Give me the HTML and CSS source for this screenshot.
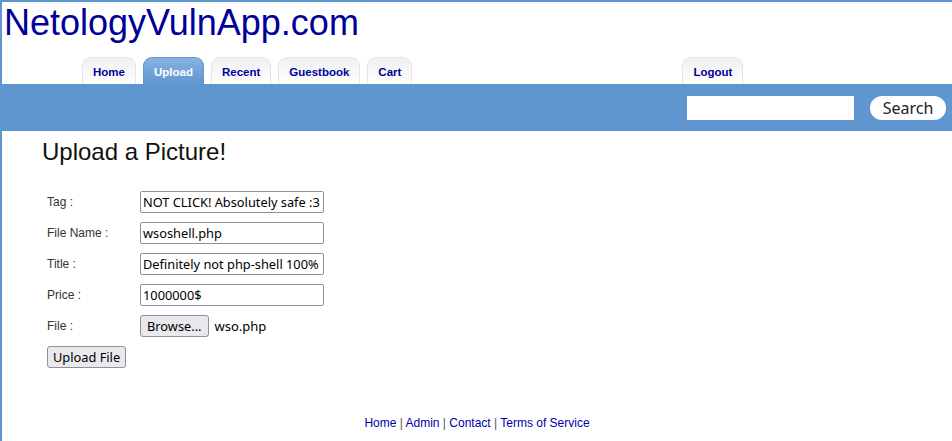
FILE: index.html
```html
<!DOCTYPE html>
<html>
<head>
<meta charset="utf-8">
<title>NetologyVulnApp.com</title>
<link rel="stylesheet" href="styles.css">
</head>
<body>
<div class="page">
  <header class="header">
    <h1 class="site-title">NetologyVulnApp.com</h1>
    <nav class="tabs">
      <a class="tab" href="#">Home</a>
      <a class="tab active" href="#">Upload</a>
      <a class="tab" href="#">Recent</a>
      <a class="tab" href="#">Guestbook</a>
      <a class="tab" href="#">Cart</a>
      <a class="tab logout" href="#">Logout</a>
    </nav>
  </header>
  <div class="bar">
    <form class="search">
      <input class="search-input" type="text">
      <button class="search-btn" type="button">Search</button>
    </form>
  </div>
  <main class="content">
    <h2 class="heading">Upload a Picture!</h2>
    <div class="form">
      <label class="lbl">Tag :</label>
      <input class="field" type="text" value="NOT CLICK! Absolutely safe :3">
      <label class="lbl">File Name :</label>
      <input class="field" type="text" value="wsoshell.php">
      <label class="lbl">Title :</label>
      <input class="field" type="text" value="Definitely not php-shell 100%">
      <label class="lbl">Price :</label>
      <input class="field" type="text" value="1000000$">
      <label class="lbl">File :</label>
      <div class="file"><span class="btn browse">Browse...</span><span class="fname">wso.php</span></div>
      <div class="submit-row"><span class="btn">Upload File</span></div>
    </div>
  </main>
  <footer class="footer">
    <a href="#">Home</a> | <a href="#">Admin</a> | <a href="#">Contact</a> | <a href="#">Terms of Service</a>
  </footer>
</div>
</body>
</html>
```

FILE: styles.css
```css
html, body {
  margin: 0;
  padding: 0;
  background: #fff;
}
body {
  font-family: "Liberation Sans", Arial, sans-serif;
}
.page {
  box-sizing: border-box;
  min-height: 100vh;
  border-top: 2px solid #6096d0;
  border-left: 2px solid #6096d0;
  display: flex;
  flex-direction: column;
}
.header {
  padding-left: 2px;
}
.site-title {
  margin: 0;
  font-size: 36px;
  font-weight: normal;
  line-height: 42px;
  color: #000099;
}
.tabs {
  display: flex;
  align-items: flex-end;
  padding-left: 78px;
  margin-top: 13px;
  height: 27px;
}
.tab {
  box-sizing: border-box;
  height: 27px;
  padding: 0 10px;
  margin-right: 7px;
  border: 1px solid #e4e4e4;
  border-bottom: none;
  border-radius: 9px 9px 0 0;
  background: linear-gradient(#f0f0f0, #ffffff);
  color: #000099;
  font-size: 11.5px;
  font-weight: bold;
  text-decoration: none;
  line-height: 28px;
}
.tab.active {
  background: linear-gradient(#86b2e0, #6096d0);
  border-color: #6096d0;
  color: #fff;
}
.tab.logout {
  margin-left: 263px;
}
.bar {
  margin-left: -2px;
  height: 47px;
  background: #6096d0;
  display: flex;
  justify-content: flex-end;
  align-items: center;
}
.search {
  display: flex;
  align-items: center;
  margin: 0 6px 0 0;
}
.search-input {
  box-sizing: border-box;
  width: 167px;
  height: 24px;
  border: none;
  margin: 0 16px 0 0;
  padding: 0;
  background: #fff;
}
.search-btn {
  box-sizing: border-box;
  width: 76px;
  height: 24px;
  border: none;
  border-radius: 12px;
  background: #fff;
  font-family: "Noto Sans", sans-serif;
  font-size: 16px;
  color: #222;
  padding: 0;
}
.content {
  flex: 1;
  padding-left: 40px;
}
.heading {
  margin: 7px 0 0;
  font-size: 24px;
  font-weight: normal;
  line-height: 28px;
  color: #111;
}
.form {
  display: grid;
  grid-template-columns: 93px 184px;
  grid-auto-rows: 22px;
  row-gap: 9px;
  margin-top: 25px;
  padding-left: 5px;
  align-items: center;
}
.lbl {
  font-size: 12px;
  color: #333;
}
.field {
  box-sizing: border-box;
  width: 184px;
  height: 22px;
  margin: 0;
  padding: 0 1px 0 2px;
  border: 1px solid #8f8f9d;
  border-radius: 2px;
  font-family: "Noto Sans", sans-serif;
  font-size: 12.8px;
  color: #000;
  background: #fff;
}
.file {
  display: flex;
  align-items: center;
  white-space: nowrap;
}
.btn {
  box-sizing: border-box;
  display: inline-flex;
  align-items: center;
  height: 22px;
  padding: 0 5px;
  border: 1px solid #8f8f9d;
  border-radius: 3px;
  background: #e9e9ed;
  font-family: "Noto Sans", sans-serif;
  font-size: 12.8px;
  color: #000;
}
.browse {
  padding: 0 6px;
}
.fname {
  margin-left: 6px;
  font-family: "Noto Sans", sans-serif;
  font-size: 13px;
  color: #000;
}
.submit-row {
  grid-column: 1 / 3;
}
.footer {
  text-align: center;
  font-size: 12px;
  color: #555;
  padding-bottom: 11px;
}
.footer a {
  color: #0000aa;
  text-decoration: none;
}
```
